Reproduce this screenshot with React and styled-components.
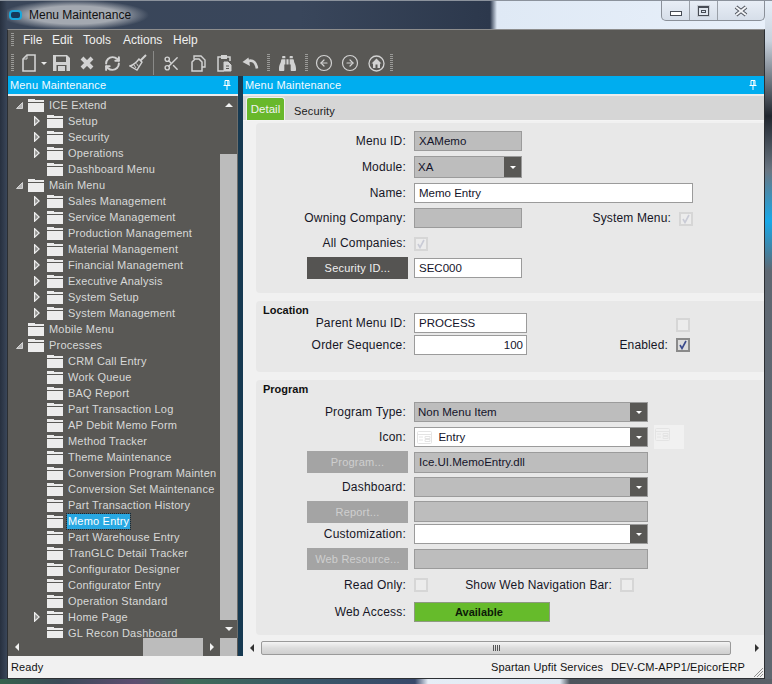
import React from 'react';
import styled, { createGlobalStyle } from 'styled-components';
import { Scissors, CircleArrowLeft, CircleArrowRight, RefreshCw } from 'lucide-react';
import { FaBinoculars } from 'react-icons/fa';

const GlobalStyle = createGlobalStyle`
  html, body { margin: 0; padding: 0; background: #2a3445; }
  body { font-family: "Liberation Sans", Arial, sans-serif; }
`;

const treeData = [
  { label: 'ICE Extend', level: 0, state: 'open' },
  { label: 'Setup', level: 1, state: 'closed' },
  { label: 'Security', level: 1, state: 'closed' },
  { label: 'Operations', level: 1, state: 'closed' },
  { label: 'Dashboard Menu', level: 1 },
  { label: 'Main Menu', level: 0, state: 'open' },
  { label: 'Sales Management', level: 1, state: 'closed' },
  { label: 'Service Management', level: 1, state: 'closed' },
  { label: 'Production Management', level: 1, state: 'closed' },
  { label: 'Material Management', level: 1, state: 'closed' },
  { label: 'Financial Management', level: 1, state: 'closed' },
  { label: 'Executive Analysis', level: 1, state: 'closed' },
  { label: 'System Setup', level: 1, state: 'closed' },
  { label: 'System Management', level: 1, state: 'closed' },
  { label: 'Mobile Menu', level: 0 },
  { label: 'Processes', level: 0, state: 'open' },
  { label: 'CRM Call Entry', level: 1 },
  { label: 'Work Queue', level: 1 },
  { label: 'BAQ Report', level: 1 },
  { label: 'Part Transaction Log', level: 1 },
  { label: 'AP Debit Memo Form', level: 1 },
  { label: 'Method Tracker', level: 1 },
  { label: 'Theme Maintenance', level: 1 },
  { label: 'Conversion Program Mainten', level: 1 },
  { label: 'Conversion Set Maintenance', level: 1 },
  { label: 'Part Transaction History', level: 1 },
  { label: 'Memo Entry', level: 1, selected: true },
  { label: 'Part Warehouse Entry', level: 1 },
  { label: 'TranGLC Detail Tracker', level: 1 },
  { label: 'Configurator Designer', level: 1 },
  { label: 'Configurator Entry', level: 1 },
  { label: 'Operation Standard', level: 1 },
  { label: 'Home Page', level: 1, state: 'closed' },
  { label: 'GL Recon Dashboard', level: 1 },
];

const Window = styled.div`
  width: 772px;
  height: 684px;
  box-sizing: border-box;
  display: flex;
  flex-direction: column;
  padding: 0 7px 5px 7px;
  overflow: hidden;
  border-top: 1px solid #8b929c;
  background:
    linear-gradient(90deg, #34614c 0, #3c4a58 60px, #5d4d70 135px, #3f6b58 190px, #3a5868 300px, #38486a 415px, #e6edf6 428px, #dfe8f2 560px, #4d545c 570px, #5a6068 100%) bottom / 100% 5px no-repeat,
    linear-gradient(180deg, #e6eef8 0, #c8d2dd 40px, #20262e 115px, #6a7682 170px, #18a8e8 220px, #5f6872 270px, #5f6770 100%) right / 7px 100% no-repeat,
    linear-gradient(90deg, #27303f 0, #3a4659 7px, #39465b 300px, #2c384c 490px, #dfe9f5 497px, #e8f0fa 100%);
`;

const TitleBar = styled.div`
  height: 28px;
  flex: none;
  display: flex;
  justify-content: space-between;
  align-items: flex-start;
`;

const TitleGroup = styled.div`
  display: flex;
  align-items: center;
  gap: 7px;
  height: 28px;
  width: 150px;
  padding-left: 2px;
  color: #101010;
  font-size: 12px;
  background: radial-gradient(ellipse 74px 15px at 68px 14px, #a4a9b1 60%, rgba(164, 169, 177, 0) 100%);
`;

const AppMark = styled.span`
  width: 13px;
  height: 10px;
  box-sizing: border-box;
  border: 2px solid #18a8dc;
  border-radius: 4px;
  background: #17395a;
`;

const Controls = styled.div`
  display: flex;
  height: 19px;
  border: 1px solid #8a9099;
  border-top: none;
  border-radius: 0 0 5px 5px;
  background: linear-gradient(180deg, #e8eef6, #d6dee9);
`;

const ControlButton = styled.div`
  width: ${p => p.$w}px;
  display: flex;
  align-items: center;
  justify-content: center;
  border-left: ${p => (p.$first ? 'none' : '1px solid #9aa0a8')};
`;

const MinGlyph = styled.span`
  width: 10px;
  height: 3px;
  margin-top: 5px;
  border: 1px solid #474c55;
  background: #fff;
`;

const MaxGlyph = styled.span`
  width: 9px;
  height: 7px;
  border: 1px solid #474c55;
  border-top-width: 2px;
  outline: 1px solid #c8ced6;
  box-shadow: inset 0 0 0 2px #dfe5ed, inset 0 0 0 3px #474c55;
`;

const Shell = styled.div`
  flex: 1;
  min-height: 0;
  display: flex;
  flex-direction: column;
  background: #595855;
  border: 1px solid #2c2f33;
  border-top-color: #8d8d8d;
`;

const MenuBar = styled.div`
  height: 20px;
  flex: none;
  display: flex;
  align-items: center;
  padding-left: 3px;
  box-sizing: border-box;
`;

const Grip = styled.span`
  width: 3px;
  height: ${p => p.$h || 16}px;
  flex: none;
  margin: ${p => p.$m || '0 4px 0 0'};
  background: repeating-linear-gradient(180deg, #9a9a98 0 1px, transparent 1px 2px);
`;

const MenuItem = styled.span`
  color: #f0f0f0;
  font-size: 12px;
  width: ${p => p.$w}px;
  flex: none;
`;

const ToolBar = styled.div`
  height: 26px;
  flex: none;
  display: flex;
  align-items: center;
  padding-left: 3px;
`;

const ToolIcon = styled.span`
  width: ${p => p.$w || 26}px;
  height: 22px;
  flex: none;
  display: flex;
  align-items: center;
  justify-content: center;
  color: #d2d2d2;
`;

const ToolSep = styled.span`
  width: 1px;
  height: 24px;
  flex: none;
  background: #8a8a88;
  margin: 0 4px 0 2px;
`;

const Panes = styled.div`
  flex: 1;
  min-height: 0;
  display: flex;
`;

const LeftPane = styled.div`
  width: 230px;
  flex: none;
  display: flex;
  flex-direction: column;
`;

const Splitter = styled.div`
  width: 5px;
  flex: none;
  background: #173a52;
`;

const RightPane = styled.div`
  flex: 1;
  min-width: 0;
  display: flex;
  flex-direction: column;
  background: #f1f1f1;
`;

const PaneHeader = styled.div`
  height: 18px;
  flex: none;
  display: flex;
  align-items: center;
  justify-content: space-between;
  padding: 0 7px 0 2px;
  background: #00adef;
  color: #f4fbff;
  font-size: 11px;
  letter-spacing: 0.17px;
  border-bottom: 2px solid #ececec;
`;

const TreeArea = styled.div`
  flex: 1;
  min-height: 0;
  display: flex;
  border-right: 1px solid #6e6e6c;
`;

const TreeList = styled.div`
  flex: 1;
  min-width: 0;
  overflow: hidden;
  padding-top: 1px;
`;

const TreeRow = styled.div`
  height: 16px;
  display: flex;
  align-items: center;
  padding-left: ${p => (p.$level ? 26 : 8)}px;
  color: #d8d8d8;
  font-size: 11px;
  letter-spacing: 0.2px;
  white-space: nowrap;
`;

const Expander = styled.span`
  width: ${p => (p.$level ? 13 : 12)}px;
  height: 12px;
  flex: none;
  display: flex;
  align-items: center;
`;

const TreeLabel = styled.span`
  margin-left: 4px;
  padding: 0 1px;
  height: 15px;
  line-height: 14px;
  box-sizing: border-box;
  background: ${p => (p.$selected ? '#29a8e2' : 'transparent')};
  color: ${p => (p.$selected ? '#fff' : 'inherit')};
  outline: ${p => (p.$selected ? '1px dotted #0d2a3c' : 'none')};
`;

const VScroll = styled.div`
  width: 17px;
  flex: none;
  display: flex;
  flex-direction: column;
`;

const ScrollSpace = styled.div`
  height: ${p => p.$h}px;
  flex: ${p => (p.$h ? 'none' : '1')};
  display: flex;
  align-items: center;
  justify-content: center;
  background: ${p => (p.$thumb ? '#bcbcbc' : 'transparent')};
`;

const TreeHScroll = styled.div`
  height: 18px;
  flex: none;
  display: flex;
  align-items: center;
`;

const HGap = styled.div`
  width: ${p => p.$w}px;
  height: 100%;
  flex: none;
  display: flex;
  align-items: center;
  justify-content: center;
  background: ${p => (p.$thumb ? '#bcbcbc' : 'transparent')};
`;

const TabStrip = styled.div`
  height: 24px;
  flex: none;
  display: flex;
  align-items: flex-end;
  padding-left: 3px;
  background: #d6d6d6;
  border-bottom: 1px solid #f4f4f4;
`;

const ActiveTab = styled.div`
  width: 37px;
  height: 22px;
  display: flex;
  align-items: center;
  justify-content: center;
  background: #68b82b;
  border: 1px solid #f0f0f0;
  border-bottom: none;
  border-radius: 3px 3px 0 0;
  box-shadow: inset 0 0 0 1px #68b82b;
  color: #f2f2f2;
  font-size: 11.5px;
`;

const Tab = styled.div`
  margin-left: 9px;
  height: 20px;
  line-height: 22px;
  color: #1a1a1a;
  font-size: 11px;
  letter-spacing: 0.15px;
`;

const FormArea = styled.div`
  flex: 1;
  min-height: 0;
  display: flex;
  flex-direction: column;
  gap: 8px;
  padding: 2px 0 0 13px;
  overflow: hidden;
`;

const Panel = styled.section`
  height: ${p => p.$h}px;
  flex: none;
  box-sizing: border-box;
  padding-top: ${p => p.$pad}px;
  background: #e8e8e8;
  border-radius: 4px 0 0 4px;
`;

const PanelTitle = styled.div`
  height: 14px;
  line-height: 14px;
  padding-left: 7px;
  color: #111;
  font-size: 11px;
  font-weight: 700;
`;

const Row = styled.div`
  height: ${p => p.$h || 20}px;
  margin-top: ${p => p.$mt || 0}px;
  display: flex;
  align-items: center;
`;

const Label = styled.span`
  width: 150px;
  flex: none;
  text-align: right;
  color: #161626;
  font-size: 12px;
  letter-spacing: 0.2px;
  margin-right: 8px;
`;

const Field = styled.div`
  width: ${p => p.$w}px;
  height: ${p => p.$h || 20}px;
  flex: none;
  box-sizing: border-box;
  display: flex;
  align-items: center;
  justify-content: ${p => (p.$right ? 'flex-end' : 'flex-start')};
  padding: 0 ${p => (p.$right ? 3 : 4)}px;
  background: ${p => (p.$white ? '#fff' : '#bdbdbd')};
  border: 1px solid #9b9b9b;
  color: #14142a;
  font-size: 11.5px;
`;

const SelectBox = styled(Field)`
  padding: 0 0 0 ${p => p.$indent || 3}px;
`;

const SelectText = styled.span`
  flex: 1;
  min-width: 0;
`;

const SelectArrow = styled.span`
  width: 17px;
  align-self: stretch;
  flex: none;
  display: flex;
  align-items: center;
  justify-content: center;
  background: #595855;
`;

const ArrowDown = styled.span`
  width: 0;
  height: 0;
  border-left: 3px solid transparent;
  border-right: 3px solid transparent;
  border-top: 3px solid #fff;
`;

const ActionButton = styled.div`
  width: 101px;
  height: ${p => p.$h || 22}px;
  flex: none;
  margin: 0 6px 0 51px;
  display: flex;
  align-items: center;
  justify-content: center;
  background: ${p => (p.$disabled ? '#a4a4a4' : '#555452')};
  color: ${p => (p.$disabled ? '#cfcfcf' : '#f0f0f0')};
  font-size: 11px;
  letter-spacing: 0.2px;
`;

const Check = styled.span`
  width: 14px;
  height: 14px;
  flex: none;
  box-sizing: border-box;
  margin-top: ${p => p.$mt || 0}px;
  display: flex;
  align-items: center;
  justify-content: center;
  background: ${p => (p.$active ? '#dcdcdc' : '#ececec')};
  border: ${p => (p.$active ? '2px solid #8a8a8a' : '2px solid #d6d6d6')};
`;

const SideLabel = styled.span`
  width: ${p => p.$w}px;
  flex: none;
  text-align: right;
  margin-right: 8px;
  color: #161626;
  font-size: 12px;
  letter-spacing: 0.15px;
`;

const IconPreview = styled.div`
  width: 30px;
  height: 24px;
  flex: none;
  margin-left: 6px;
  display: flex;
  align-items: flex-start;
  padding: 3px 1px;
  box-sizing: border-box;
  background: #f1f1f1;
`;

const AvailableBadge = styled.div`
  width: 136px;
  height: 20px;
  flex: none;
  box-sizing: border-box;
  display: flex;
  align-items: center;
  justify-content: center;
  padding-right: 6px;
  background: #66bb2b;
  border: 1px solid #8d9a80;
  color: #0c1a08;
  font-size: 11px;
  font-weight: 700;
`;

const HScroll = styled.div`
  height: 16px;
  flex: none;
  display: flex;
  align-items: center;
  padding-left: 7px;
  background: #f1f1f1;
`;

const HThumb = styled.div`
  width: 470px;
  height: 14px;
  margin-left: 7px;
  flex: none;
  display: flex;
  align-items: center;
  justify-content: center;
  gap: 1px;
  border: 1px solid #9a9a9a;
  border-radius: 2px;
  box-sizing: border-box;
  background: linear-gradient(180deg, #f4f4f4, #dcdcdc 50%, #cfcfcf);
`;

const ThumbLine = styled.span`
  width: 1px;
  height: 6px;
  background: #555;
`;

const StatusBar = styled.div`
  height: 22px;
  flex: none;
  display: flex;
  align-items: center;
  justify-content: space-between;
  padding: 0 19px 0 3px;
  background: #f1f1f1;
  color: #111;
  font-size: 11px;
  letter-spacing: 0.12px;
  position: relative;
`;

const StatusRight = styled.div`
  display: flex;
  gap: 8px;
`;

const SizeGrip = styled.svg`
  position: absolute;
  right: 0;
  bottom: 0;
`;

function Folder() {
  return (
    <svg width="16" height="13" viewBox="0 0 16 13">
      <path d="M0 0h7v1h9v2H0z" fill="#ececec" />
      <rect x="0" y="4" width="16" height="9" fill="#ececec" />
    </svg>
  );
}

function TreeToggle({ state }) {
  if (state === 'open') {
    return (
      <svg width="7" height="7" viewBox="0 0 7 7">
        <path d="M6.5 0.5V6.5H0.5z" fill="#b5b5b5" stroke="#e6e6e6" strokeWidth="0.8" />
      </svg>
    );
  }
  if (state === 'closed') {
    return (
      <svg width="6" height="10" viewBox="0 0 6 10">
        <path d="M0.6 0.8L5.2 5 0.6 9.2z" fill="#8f8f8d" stroke="#ededed" strokeWidth="1.2" />
      </svg>
    );
  }
  return null;
}

function Pin() {
  return (
    <svg width="8" height="10" viewBox="0 0 8 10">
      <path d="M2 0.5h4v5H2zM0.5 5.5h7M4 6v4M4.8 1v4" fill="none" stroke="#fff" />
    </svg>
  );
}

function CloseGlyph() {
  const cross = 'M2 2L12 10M12 2L2 10';
  return (
    <svg width="14" height="12" viewBox="0 0 14 12">
      <path d={cross} stroke="#50555e" strokeWidth="4" />
      <path d={cross} stroke="#f2f4f7" strokeWidth="2" />
    </svg>
  );
}

function SmallArrow({ dir, color = '#f2f2f2', size = 4 }) {
  const pts = {
    up: `0,${size} ${size},0 ${size * 2},${size}`,
    down: `0,0 ${size},${size} ${size * 2},0`,
    left: `${size},0 ${size},${size * 2} 0,${size}`,
    right: `0,0 0,${size * 2} ${size},${size}`,
  }[dir];
  const vertical = dir === 'up' || dir === 'down';
  return (
    <svg width={vertical ? size * 2 : size} height={vertical ? size : size * 2}>
      <polygon points={pts} fill={color} />
    </svg>
  );
}

function Tick({ color }) {
  return (
    <svg width="10" height="10" viewBox="0 0 10 10">
      <path d="M2 5L4 8.5 8 1" fill="none" stroke={color} strokeWidth="1.6" />
    </svg>
  );
}

function EntryGlyph({ color = '#e4e4e4', bg = '#fff' }) {
  return (
    <svg width="15" height="13" viewBox="0 0 15 13">
      <rect x="0.5" y="0.5" width="14" height="12" rx="1" fill={bg} stroke={color} />
      <path d="M0.5 3.5h14M2 6h4M2 9h4M8 5.5h5v2H8zM8 8.5h5v2H8z" fill="none" stroke={color} />
    </svg>
  );
}

const iconFill = '#d2d2d2';

function NewDoc() {
  return (
    <svg width="14" height="18" viewBox="0 0 14 18">
      <path d="M5 1h8v16H1V5z" fill="none" stroke={iconFill} strokeWidth="1.6" />
      <path d="M5 1v4H1" fill="none" stroke={iconFill} />
    </svg>
  );
}

function SaveDisk() {
  return (
    <svg width="17" height="16" viewBox="0 0 17 16">
      <path d="M0 0h14l3 3v13H0z" fill={iconFill} />
      <rect x="3" y="1.5" width="10" height="5.5" fill="#595855" />
      <rect x="3.5" y="10" width="10" height="6" fill="#595855" />
      <rect x="5" y="11" width="7" height="5" fill={iconFill} />
    </svg>
  );
}

function BoldCross() {
  return (
    <svg width="14" height="14" viewBox="0 0 14 14">
      <path d="M2 2L12 12M12 2L2 12" stroke={iconFill} strokeWidth="4" />
    </svg>
  );
}

function Broom() {
  return (
    <svg width="18" height="18" viewBox="0 0 18 18">
      <path d="M17 1l-6 6" stroke={iconFill} strokeWidth="2" />
      <path d="M10 5l3 3-5 8-7-4c3-1 6-3 9-7z" fill="none" stroke={iconFill} strokeWidth="1.4" />
      <path d="M5 11l2 3M7.5 9.5l2 3" stroke={iconFill} />
    </svg>
  );
}

function CopyDocs() {
  return (
    <svg width="15" height="17" viewBox="0 0 15 17">
      <path d="M3 4V1h7l4 4v7h-3" fill="none" stroke={iconFill} strokeWidth="1.4" />
      <path d="M4 4h4l3 3v9H1V7z" fill="none" stroke={iconFill} strokeWidth="1.5" />
    </svg>
  );
}

function PasteBoard() {
  return (
    <svg width="15" height="18" viewBox="0 0 15 18">
      <path d="M4 3H1v14h6M10 3h3v4" fill="none" stroke={iconFill} strokeWidth="1.5" />
      <rect x="4" y="1" width="6" height="4" fill={iconFill} />
      <path d="M7 8h4l3 3v6H7z" fill={iconFill} stroke={iconFill} />
      <path d="M9 12h3M9 14.5h3" stroke="#595855" />
    </svg>
  );
}

function UndoArrow() {
  return (
    <svg width="17" height="13" viewBox="0 0 17 13">
      <path d="M4.5 5.5C8 2 13.5 3 15 11.5" fill="none" stroke={iconFill} strokeWidth="2.6" />
      <path d="M0.5 5L6.5 0.5 8 9z" fill={iconFill} />
    </svg>
  );
}

function HomeCircle() {
  return (
    <svg width="17" height="17" viewBox="0 0 17 17">
      <circle cx="8.5" cy="8.5" r="7.5" fill="none" stroke={iconFill} strokeWidth="1.3" />
      <path d="M8.5 3.5L13.5 8.5H12V13H5V8.5H3.5z" fill={iconFill} />
      <rect x="7.5" y="9.5" width="2" height="3.5" fill="#595855" />
    </svg>
  );
}

export default function App() {
  return (
    <>
      <GlobalStyle />
      <Window>
        <TitleBar>
          <TitleGroup>
            <AppMark />
            Menu Maintenance
          </TitleGroup>
          <Controls>
            <ControlButton $w={27} $first><MinGlyph /></ControlButton>
            <ControlButton $w={27}><MaxGlyph /></ControlButton>
            <ControlButton $w={46}><CloseGlyph /></ControlButton>
          </Controls>
        </TitleBar>
        <Shell>
          <MenuBar>
            <Grip $h={14} $m="0 9px 0 0" />
            <MenuItem $w={29}>File</MenuItem>
            <MenuItem $w={31}>Edit</MenuItem>
            <MenuItem $w={40}>Tools</MenuItem>
            <MenuItem $w={50}>Actions</MenuItem>
            <MenuItem $w={40}>Help</MenuItem>
          </MenuBar>
          <ToolBar>
            <Grip $h={18} />
            <ToolIcon $w={22}><NewDoc /></ToolIcon>
            <ToolIcon $w={8}><SmallArrow dir="down" color="#e8e8e8" size={3} /></ToolIcon>
            <ToolIcon $w={26}><SaveDisk /></ToolIcon>
            <ToolIcon $w={26}><BoldCross /></ToolIcon>
            <ToolIcon $w={25}><RefreshCw size={17} strokeWidth={2.8} /></ToolIcon>
            <ToolIcon $w={26}><Broom /></ToolIcon>
            <ToolSep />
            <ToolIcon $w={27}><Scissors size={17} strokeWidth={2} /></ToolIcon>
            <ToolIcon $w={26}><CopyDocs /></ToolIcon>
            <ToolIcon $w={26}><PasteBoard /></ToolIcon>
            <ToolIcon $w={26}><UndoArrow /></ToolIcon>
            <Grip $h={18} $m="0 5px 0 4px" />
            <ToolIcon $w={24}><FaBinoculars size={17} /></ToolIcon>
            <Grip $h={18} $m="0 3px 0 6px" />
            <ToolIcon $w={26}><CircleArrowLeft size={18} strokeWidth={1.6} /></ToolIcon>
            <ToolIcon $w={26}><CircleArrowRight size={18} strokeWidth={1.6} /></ToolIcon>
            <ToolIcon $w={26}><HomeCircle /></ToolIcon>
            <Grip $h={18} $m="0 0 0 1px" />
          </ToolBar>
          <Panes>
            <LeftPane>
              <PaneHeader>Menu Maintenance<Pin /></PaneHeader>
              <TreeArea>
                <TreeList>
                  {treeData.map(item => (
                    <TreeRow key={item.label} $level={item.level}>
                      <Expander $level={item.level}><TreeToggle state={item.state} /></Expander>
                      <Folder />
                      <TreeLabel $selected={item.selected}>{item.label}</TreeLabel>
                    </TreeRow>
                  ))}
                </TreeList>
                <VScroll>
                  <ScrollSpace $h={18}><SmallArrow dir="up" /></ScrollSpace>
                  <ScrollSpace $h={40} />
                  <ScrollSpace $h={466} $thumb />
                  <ScrollSpace><SmallArrow dir="down" /></ScrollSpace>
                </VScroll>
              </TreeArea>
              <TreeHScroll>
                <HGap $w={18}><SmallArrow dir="left" /></HGap>
                <HGap $w={117} />
                <HGap $w={60} $thumb />
                <HGap $w={17}><SmallArrow dir="right" /></HGap>
                <HGap $w={17} $thumb />
              </TreeHScroll>
            </LeftPane>
            <Splitter />
            <RightPane>
              <PaneHeader>Menu Maintenance<Pin /></PaneHeader>
              <TabStrip>
                <ActiveTab>Detail</ActiveTab>
                <Tab>Security</Tab>
              </TabStrip>
              <FormArea>
                <Panel $h={170} $pad={8}>
                  <Row>
                    <Label>Menu ID:</Label>
                    <Field $w={108}>XAMemo</Field>
                  </Row>
                  <Row $h={22} $mt={5}>
                    <Label>Module:</Label>
                    <SelectBox $w={108} $h={22}><SelectText>XA</SelectText><SelectArrow><ArrowDown /></SelectArrow></SelectBox>
                  </Row>
                  <Row $mt={5}>
                    <Label>Name:</Label>
                    <Field $w={279} $white>Memo Entry</Field>
                  </Row>
                  <Row $mt={5}>
                    <Label>Owning Company:</Label>
                    <Field $w={108} />
                    <SideLabel $w={149}>System Menu:</SideLabel>
                    <Check $mt={2}><Tick color="#c9cbd6" /></Check>
                  </Row>
                  <Row $mt={5} $h={20}>
                    <Label>All Companies:</Label>
                    <Check $mt={1}><Tick color="#c9cbd6" /></Check>
                  </Row>
                  <Row $mt={4} $h={22}>
                    <ActionButton>Security ID...</ActionButton>
                    <Field $w={108} $white>SEC000</Field>
                  </Row>
                </Panel>
                <Panel $h={71} $pad={2}>
                  <PanelTitle>Location</PanelTitle>
                  <Row $mt={-5} $h={22}>
                    <Label>Parent Menu ID:</Label>
                    <Field $w={113} $white>PROCESS</Field>
                    <SideLabel $w={141} />
                    <Check $mt={4} />
                  </Row>
                  <Row $mt={1} $h={20}>
                    <Label>Order Sequence:</Label>
                    <Field $w={113} $white $right>100</Field>
                    <SideLabel $w={141}>Enabled:</SideLabel>
                    <Check $active><Tick color="#3a4a8c" /></Check>
                  </Row>
                </Panel>
                <Panel $h={255} $pad={2}>
                  <PanelTitle>Program</PanelTitle>
                  <Row $mt={6}>
                    <Label>Program Type:</Label>
                    <SelectBox $w={234}><SelectText>Non Menu Item</SelectText><SelectArrow><ArrowDown /></SelectArrow></SelectBox>
                  </Row>
                  <Row $mt={5}>
                    <Label>Icon:</Label>
                    <SelectBox $w={234} $white $indent={2}>
                      <EntryGlyph />
                      <SelectText>&nbsp;&nbsp;Entry</SelectText>
                      <SelectArrow><ArrowDown /></SelectArrow>
                    </SelectBox>
                    <IconPreview><EntryGlyph bg="#f1f1f1" /></IconPreview>
                  </Row>
                  <Row $mt={4} $h={22}>
                    <ActionButton $disabled>Program...</ActionButton>
                    <Field $w={234} $h={21}>Ice.UI.MemoEntry.dll</Field>
                  </Row>
                  <Row $mt={4}>
                    <Label>Dashboard:</Label>
                    <SelectBox $w={234}><SelectText /><SelectArrow><ArrowDown /></SelectArrow></SelectBox>
                  </Row>
                  <Row $mt={4} $h={21}>
                    <ActionButton $disabled $h={22}>Report...</ActionButton>
                    <Field $w={234} $h={21} />
                  </Row>
                  <Row $mt={2}>
                    <Label>Customization:</Label>
                    <SelectBox $w={234} $white><SelectText /><SelectArrow><ArrowDown /></SelectArrow></SelectBox>
                  </Row>
                  <Row $mt={4} $h={22}>
                    <ActionButton $disabled>Web Resource...</ActionButton>
                    <Field $w={234} $h={20} />
                  </Row>
                  <Row $mt={7} $h={16}>
                    <Label>Read Only:</Label>
                    <Check />
                    <SideLabel $w={184}>Show Web Navigation Bar:</SideLabel>
                    <Check />
                  </Row>
                  <Row $mt={9}>
                    <Label>Web Access:</Label>
                    <AvailableBadge>Available</AvailableBadge>
                  </Row>
                </Panel>
              </FormArea>
              <HScroll>
                <SmallArrow dir="left" color="#333" />
                <HThumb><ThumbLine /><ThumbLine /><ThumbLine /><ThumbLine /></HThumb>
                <HGap $w={24} />
                <SmallArrow dir="right" color="#333" />
              </HScroll>
            </RightPane>
          </Panes>
          <StatusBar>
            <span>Ready</span>
            <StatusRight>
              <span>Spartan Upfit Services</span>
              <span>DEV-CM-APP1/EpicorERP</span>
            </StatusRight>
            <SizeGrip width="11" height="11" viewBox="0 0 11 11">
              <path d="M1 10L10 1M4 10L10 4M7 10L10 7" stroke="#8f8f8f" />
            </SizeGrip>
          </StatusBar>
        </Shell>
      </Window>
    </>
  );
}
